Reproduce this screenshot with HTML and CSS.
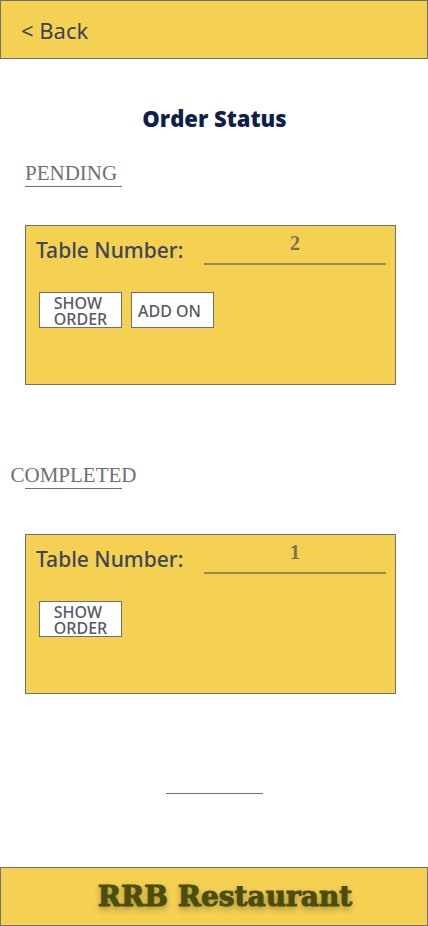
FILE: index.html
```html
<!DOCTYPE html>
<html lang="en">
<head>
<meta charset="utf-8">
<meta name="viewport" content="width=device-width, initial-scale=1">
<title>Order Status</title>
<link rel="stylesheet" href="styles.css">
</head>
<body>
<header class="bar top-bar"><a class="back" href="#">&lt; Back</a></header>
<main class="content">
  <h1 class="title">Order Status</h1>
  <section class="group">
    <h2 class="group-title"><span>PENDING</span></h2>
    <article class="card">
      <div class="field">
        <label class="field-label" for="pending-table">Table Number:</label>
        <input class="field-input" id="pending-table" type="text" inputmode="numeric" value="2">
      </div>
      <div class="actions">
        <button class="action" type="button"><span>SHOW<br>ORDER</span></button>
        <button class="action action-single" type="button">ADD ON</button>
      </div>
    </article>
  </section>
  <section class="group">
    <h2 class="group-title group-title-completed"><span>COMPLETED</span></h2>
    <article class="card">
      <div class="field">
        <label class="field-label" for="completed-table">Table Number:</label>
        <input class="field-input" id="completed-table" type="text" inputmode="numeric" value="1">
      </div>
      <div class="actions">
        <button class="action" type="button"><span>SHOW<br>ORDER</span></button>
      </div>
    </article>
  </section>
</main>
<hr class="end-rule">
<footer class="bar bottom-bar"><p class="brand">RRB Restaurant</p></footer>
</body>
</html>
```
FILE: styles.css
```css
* {
  box-sizing: border-box;
}

body {
  margin: 0;
  min-height: 100vh;
  display: flex;
  flex-direction: column;
  background: #fff;
  font-family: "Noto Sans", sans-serif;
}

.bar {
  height: 59px;
  flex: none;
  display: flex;
  align-items: center;
  background: #f4d153;
  border: 1px solid #707070;
}

.top-bar {
  padding: 0 20px;
}

.back {
  font-size: 22px;
  line-height: 30px;
  color: #3c4350;
  text-decoration: none;
}

.content {
  padding: 43px 32px 0 25px;
}

.title {
  margin: 0 0 26px;
  padding-left: 8px;
  font-family: "Open Sans", sans-serif;
  font-size: 22px;
  line-height: 32px;
  font-weight: 800;
  text-align: center;
  color: #0f1f4b;
}

.group {
  margin-bottom: 77px;
}

.group-title {
  width: 97px;
  margin: 0 0 38px;
  display: flex;
  border-bottom: 1px solid #707070;
  font-family: "Liberation Serif", serif;
  font-size: 21px;
  line-height: 26px;
  font-weight: 400;
  color: #707070;
}

.group-title-completed {
  justify-content: center;
  margin-bottom: 45px;
}

.card {
  min-height: 160px;
  padding: 8px 9px 8px 10px;
  background: #f4d153;
  border: 1px solid #707070;
}

.field {
  display: flex;
  align-items: flex-start;
  justify-content: space-between;
  gap: 16px;
}

.field-label {
  flex: none;
  font-size: 21px;
  line-height: 32px;
  font-weight: 500;
  color: #3f4656;
}

.field-input {
  width: 52%;
  height: 31px;
  min-width: 0;
  padding: 0 0 10px;
  border: 0;
  border-bottom: 2px solid #998a50;
  background: transparent;
  font-family: "Liberation Serif", serif;
  font-size: 20px;
  line-height: 20px;
  font-weight: 700;
  text-align: center;
  color: #7b744f;
}

.actions {
  display: flex;
  gap: 9px;
  margin: 26px 0 0 3px;
}

.action {
  width: 83px;
  height: 36px;
  padding: 1px 0 0;
  display: flex;
  align-items: center;
  justify-content: center;
  background: #fff;
  border: 1px solid #707070;
  font-family: "Noto Sans", sans-serif;
  font-size: 16px;
  line-height: 16px;
  font-weight: 500;
  text-align: left;
  color: #565962;
}

.action-single {
  padding-right: 6px;
}

.end-rule {
  width: 97px;
  margin: 22px auto 72px;
  border: 0;
  border-top: 1px solid #707070;
}

.bottom-bar {
  justify-content: center;
  margin-top: auto;
  padding-left: 22px;
}

.brand {
  margin: 0;
  font-family: "DejaVu Serif", serif;
  font-size: 28px;
  line-height: 36px;
  font-weight: 700;
  color: #4b4d0b;
  -webkit-text-stroke: 1px #4b4d0b;
  text-shadow: 0 3px 6px rgba(0, 0, 0, 0.4);
}
```
